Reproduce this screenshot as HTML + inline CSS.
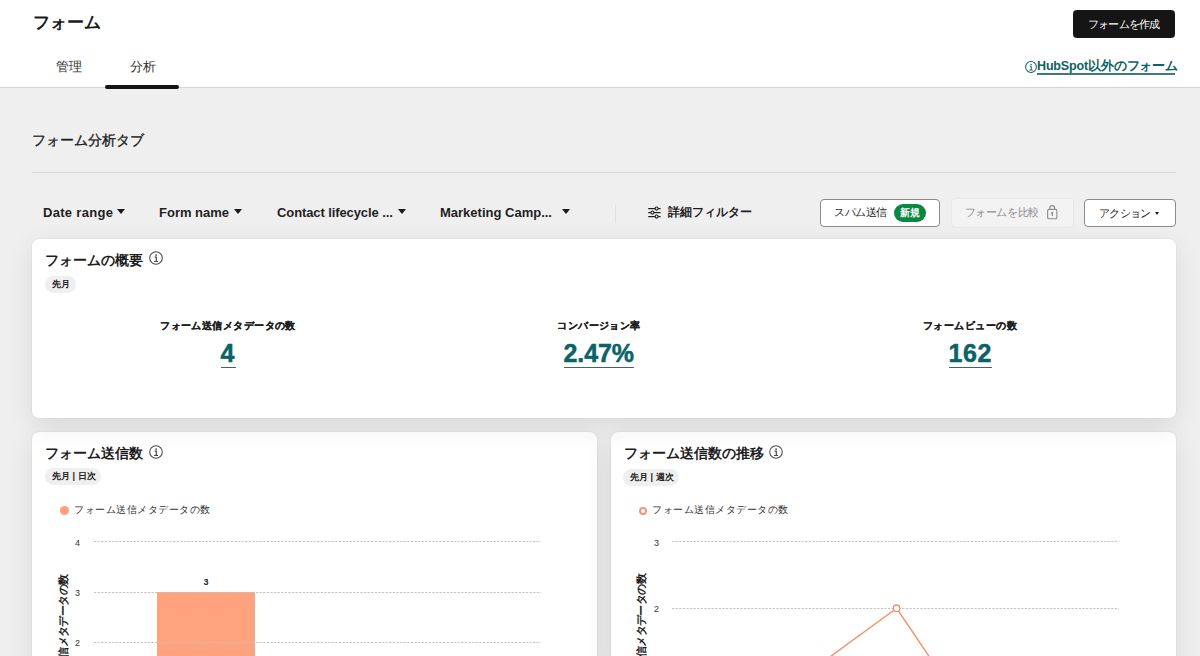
<!DOCTYPE html>
<html lang="ja">
<head>
<meta charset="utf-8">
<title>フォーム</title>
<style>
html,body{margin:0;padding:0}
body{width:1200px;height:656px;overflow:hidden;position:relative;background:#efefef;font-family:"Liberation Sans",sans-serif;color:#1f1f1f}
.a{position:absolute;white-space:nowrap;line-height:1}
#hdr{position:absolute;left:0;top:0;width:1200px;height:87px;background:#fff;border-bottom:1px solid #d4d4d4}
.card{position:absolute;background:#fff;border-radius:7px;box-shadow:0 0 2px rgba(0,0,0,.10),0 8px 28px rgba(0,0,0,.09)}
.tag{position:absolute;background:#efefef;border-radius:9px;height:17px}
.tag span{position:absolute;top:4px;font:bold 9px/1 "Liberation Sans",sans-serif;color:#222;white-space:nowrap;word-spacing:0}
.btn{position:absolute;box-sizing:border-box;border-radius:4px}
.dd{position:absolute;width:0;height:0;border-left:4.5px solid transparent;border-right:4.5px solid transparent;border-top:5.5px solid #1a1a1a}
.kl{position:absolute;font:bold 10px/1 "Liberation Sans",sans-serif;letter-spacing:0.45px;-webkit-text-stroke:0.2px #1f1f1f;color:#1f1f1f;white-space:nowrap;text-align:center;width:200px}
.kv{position:absolute;font:bold 25px/1 "Liberation Sans",sans-serif;color:#0b6366;-webkit-text-stroke:0.5px #0b6366;letter-spacing:0.6px;white-space:nowrap;border-bottom:1px solid #35696a;padding-bottom:1px}
</style>
</head>
<body>
<div id="hdr">
  <div class="a" style="left:33px;top:14px;font-size:17px;font-weight:bold;color:#1a1a1a">フォーム</div>
  <div class="a" style="left:56px;top:60px;font-size:13px;color:#333">管理</div>
  <div class="a" style="left:130px;top:60px;font-size:13px;color:#333">分析</div>
  <div style="position:absolute;left:105px;top:85px;width:74px;height:4px;border-radius:2px;background:#151515"></div>
  <div class="btn" style="left:1073px;top:10px;width:102px;height:28px;background:#151515">
    <div class="a" style="left:15px;top:9px;font-size:11px;color:#fff;letter-spacing:-0.8px">フォームを作成</div>
  </div>
  <svg style="position:absolute;left:1025px;top:60.5px" width="12" height="12" viewBox="0 0 14 14"><circle cx="7" cy="7" r="6.3" fill="none" stroke="#0b6366" stroke-width="1.2"/><circle cx="7.1" cy="4.1" r="0.85" fill="#0b6366"/><path d="M5.7 6.1H7.3V10.4M5.1 10.5H9" fill="none" stroke="#0b6366" stroke-width="1.15"/></svg>
  <div class="a" style="left:1037px;top:60px;font-size:12.5px;font-weight:bold;color:#0b6366;letter-spacing:-0.15px">HubSpot以外のフォーム</div>
  <div style="position:absolute;left:1037px;top:73px;width:138px;height:2px;background:#3c7a7c"></div>
</div>

<div class="a" style="left:32px;top:133px;font-size:14px;color:#1f1f1f;-webkit-text-stroke:0.35px #1f1f1f">フォーム分析タブ</div>
<div style="position:absolute;left:32px;top:172px;width:1144px;height:1px;background:#d9d9d9"></div>

<!-- filter row -->
<div class="a" style="left:43px;top:206px;font-size:13px;font-weight:bold;letter-spacing:0.3px">Date range</div>
<div class="dd" style="left:117px;top:209px"></div>
<div class="a" style="left:159px;top:206px;font-size:13px;font-weight:bold">Form name</div>
<div class="dd" style="left:234px;top:209px"></div>
<div class="a" style="left:277px;top:206px;font-size:13px;font-weight:bold;letter-spacing:-0.1px">Contact lifecycle ...</div>
<div class="dd" style="left:398px;top:209px"></div>
<div class="a" style="left:440px;top:206px;font-size:13px;font-weight:bold">Marketing Camp...</div>
<div class="dd" style="left:562px;top:209px"></div>
<div style="position:absolute;left:615px;top:204px;width:1px;height:19px;background:#e2e2e2"></div>
<svg style="position:absolute;left:647px;top:206px" width="15" height="13" viewBox="0 0 15 13">
  <g stroke="#1f1f1f" stroke-width="1.2" fill="none">
    <line x1="1.2" y1="2.6" x2="13.6" y2="2.6"/><line x1="1.2" y1="6.6" x2="13.6" y2="6.6"/><line x1="1.2" y1="10.6" x2="13.6" y2="10.6"/>
  </g>
  <g fill="#f0f0f0" stroke="#1f1f1f" stroke-width="1.1">
  <circle cx="9.6" cy="2.6" r="1.55"/>
  <circle cx="5.4" cy="6.6" r="1.55"/>
  <circle cx="9.6" cy="10.6" r="1.55"/>
  </g>
</svg>
<div class="a" style="left:668px;top:206px;font-size:12px;font-weight:bold">詳細フィルター</div>

<div class="btn" style="left:820px;top:199px;width:120px;height:28px;background:#fff;border:1px solid #8a8a8a">
  <div class="a" style="left:13px;top:7px;font-size:11px;color:#222;letter-spacing:-0.45px">スパム送信</div>
  <div style="position:absolute;left:73px;top:4px;width:32px;height:18px;border-radius:9px;background:#0a8741">
    <div class="a" style="left:6px;top:4px;font-size:10px;font-weight:bold;color:#fff">新規</div>
  </div>
</div>
<div class="btn" style="left:951px;top:198px;width:123px;height:30px;background:#f3f3f3;border:1px solid #e8e8e8">
  <div class="a" style="left:12.5px;top:8px;font-size:11px;color:#8c8c8c;letter-spacing:-0.35px">フォームを比較</div>
  <svg style="position:absolute;left:95px;top:6px" width="12" height="15" viewBox="0 0 12 15">
    <path d="M2.8 4.6V3.1a2.45 2.45 0 0 1 4.9 0V4.6" stroke="#8c8c8c" stroke-width="1.1" fill="none"/>
    <rect x="0.65" y="4.4" width="9.2" height="9.3" rx="1.3" stroke="#8c8c8c" stroke-width="1.1" fill="none"/>
    <circle cx="5.25" cy="7.7" r="1.05" fill="#8c8c8c"/>
    <path d="M5.25 8V10.9" stroke="#8c8c8c" stroke-width="1.2"/>
  </svg>
</div>
<div class="btn" style="left:1084px;top:199px;width:92px;height:28px;background:#fff;border:1px solid #8a8a8a">
  <div class="a" style="left:14px;top:8px;font-size:11px;color:#222;letter-spacing:-0.7px">アクション</div>
  <div class="dd" style="left:70px;top:12px;border-left-width:2.8px;border-right-width:2.8px;border-top-width:3.5px"></div>
</div>

<!-- card 1 -->
<div class="card" style="z-index:2;left:32px;top:239px;width:1144px;height:179px">
  <div class="a" style="left:13px;top:14px;font-size:14px;font-weight:bold">フォームの概要</div>
  <svg style="position:absolute;left:117px;top:12px" width="14" height="14" viewBox="0 0 14 14"><circle cx="7" cy="7" r="6.3" fill="none" stroke="#4a4a4a" stroke-width="1.05"/><circle cx="7.1" cy="4.1" r="0.85" fill="#444"/><path d="M5.7 6.1H7.3V10.4M5.1 10.5H9" fill="none" stroke="#444" stroke-width="1.15"/></svg>
  <div class="tag" style="left:13px;top:37px;width:31px;height:17px"><span style="left:7px;top:4px">先月</span></div>
  <div class="kl" style="left:96px;top:82px">フォーム送信メタデータの数</div>
  <div class="kv" style="left:188.5px;top:102px;letter-spacing:1.5px">4</div>
  <div class="kl" style="left:467px;top:82px">コンバージョン率</div>
  <div class="kv" style="left:531.5px;top:102px;letter-spacing:-0.1px">2.47%</div>
  <div class="kl" style="left:838px;top:82px">フォームビューの数</div>
  <div class="kv" style="left:916.5px;top:102px">162</div>
</div>

<!-- card 2 -->
<div class="card" style="left:32px;top:432px;width:565px;height:240px">
  <div class="a" style="left:13px;top:14px;font-size:14px;font-weight:bold">フォーム送信数</div>
  <svg style="position:absolute;left:117px;top:13px" width="14" height="14" viewBox="0 0 14 14"><circle cx="7" cy="7" r="6.3" fill="none" stroke="#4a4a4a" stroke-width="1.05"/><circle cx="7.1" cy="4.1" r="0.85" fill="#444"/><path d="M5.7 6.1H7.3V10.4M5.1 10.5H9" fill="none" stroke="#444" stroke-width="1.15"/></svg>
  <div class="tag" style="left:13px;top:36px;width:56px"><span style="left:7px">先月 | 日次</span></div>
  <div style="position:absolute;left:28px;top:73.8px;width:8.8px;height:8.8px;border-radius:50%;background:#fd9f7c"></div>
  <div class="a" style="left:42px;top:73px;font-size:10px;letter-spacing:0.5px;color:#333">フォーム送信メタデータの数</div>
</div>

<!-- card 3 -->
<div class="card" style="left:611px;top:432px;width:565px;height:240px">
  <div class="a" style="left:13px;top:14px;font-size:14px;font-weight:bold">フォーム送信数の推移</div>
  <svg style="position:absolute;left:158px;top:13px" width="14" height="14" viewBox="0 0 14 14"><circle cx="7" cy="7" r="6.3" fill="none" stroke="#4a4a4a" stroke-width="1.05"/><circle cx="7.1" cy="4.1" r="0.85" fill="#444"/><path d="M5.7 6.1H7.3V10.4M5.1 10.5H9" fill="none" stroke="#444" stroke-width="1.15"/></svg>
  <div class="tag" style="left:12px;top:37px;width:56px"><span style="left:7px">先月 | 週次</span></div>
  <div style="position:absolute;left:28px;top:74.8px;width:8.4px;height:8.4px;box-sizing:border-box;border-radius:50%;border:2.2px solid #f0967a"></div>
  <div class="a" style="left:41px;top:73px;font-size:10px;letter-spacing:0.5px;color:#333">フォーム送信メタデータの数</div>
</div>


<!-- charts overlay -->
<svg style="position:absolute;left:0;top:0" width="1200" height="656" viewBox="0 0 1200 656">
  <rect x="157" y="592" width="98" height="70" fill="#ffa37f"/>
  <g stroke="#c2c2c2" stroke-width="1" stroke-dasharray="2.2 1.4" fill="none">
    <line x1="94" y1="541.5" x2="541" y2="541.5"/>
    <line x1="94" y1="592.5" x2="541" y2="592.5"/>
    <line x1="94" y1="642.5" x2="541" y2="642.5"/>
    <line x1="672" y1="541.5" x2="1119" y2="541.5"/>
    <line x1="672" y1="608.5" x2="1119" y2="608.5"/>
  </g>
  <g font-family="Liberation Sans, sans-serif" font-size="9" fill="#333">
    <text x="75" y="545.5">4</text>
    <text x="75" y="595.5">3</text>
    <text x="75" y="646">2</text>
    <text x="654" y="545.5">3</text>
    <text x="654" y="612">2</text>
  </g>
  <text x="206" y="584.8" font-family="Liberation Sans, sans-serif" font-size="9" font-weight="bold" fill="#222" text-anchor="middle">3</text>
  <text transform="translate(66.5,574.5) rotate(-90)" text-anchor="end" font-family="Liberation Sans, sans-serif" font-size="11" letter-spacing="-0.6" font-weight="bold" fill="#1f1f1f">フォーム送信メタデータの数</text>
  <text transform="translate(645,574) rotate(-90)" text-anchor="end" font-family="Liberation Sans, sans-serif" font-size="11" letter-spacing="-0.6" font-weight="bold" fill="#1f1f1f">フォーム送信メタデータの数</text>
  <polyline points="764,705 896.6,608.3 962,705" fill="none" stroke="#f2916d" stroke-width="1.4"/>
  <circle cx="896.6" cy="608.3" r="3.3" fill="#fff" stroke="#f2916d" stroke-width="1.4"/>
</svg>
</body>
</html>
